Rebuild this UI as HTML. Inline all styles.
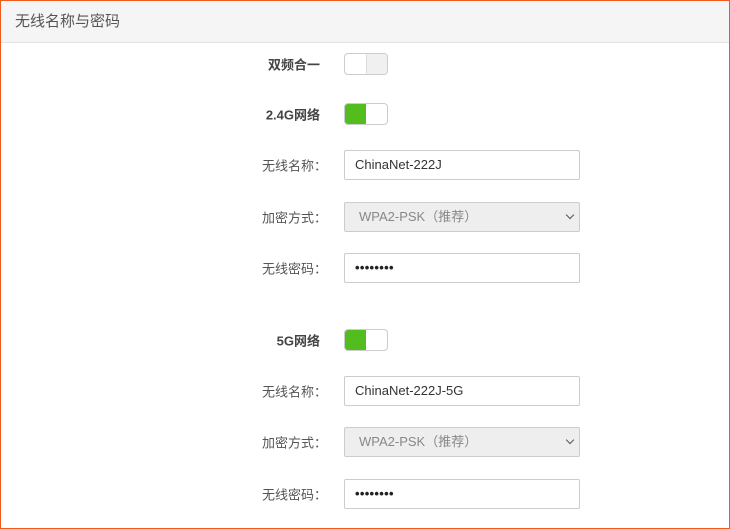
<!DOCTYPE html>
<html><head><meta charset="utf-8"><style>
body{margin:0;width:730px;height:529px;overflow:hidden;background:#fff;font-family:"Liberation Sans","Noto Sans CJK SC",sans-serif}
.frame{position:absolute;left:0;top:0;width:728px;height:527px;border:1px solid #f05a1a;}
.hd{position:absolute;left:0;top:0;width:728px;height:41px;background:#f5f5f5;border-bottom:1px solid #e3e3e3;}
.hd span{position:absolute;left:14px;top:9px;font-size:15px;color:#555}
.lab{position:absolute;left:262px;font-size:13px;color:#555;white-space:nowrap;transform:translateY(-50%)}
.b{font-weight:bold;color:#444;left:auto;right:410px}
.tg{position:absolute;left:344px;width:42px;height:20px;border:1px solid #ccc;border-radius:4px;background:#fff;transform:translateY(-50%);overflow:hidden}
.tg.off:after{content:"";position:absolute;left:21px;top:0;width:21px;height:20px;background:#f0f0f0;border-left:1px solid #ddd}
.tg.on:before{content:"";position:absolute;left:0;top:0;width:21px;height:20px;background:#52bd1c}
.in{position:absolute;left:344px;width:224px;height:28px;border:1px solid #ccc;border-radius:2px;background:#fff;transform:translateY(-50%);font-size:13px;color:#333;line-height:28px;padding-left:10px}
.sel{background:#eee;color:#888;padding-left:14px;width:220px}
.sel i{position:absolute;right:6px;top:9px;width:5px;height:5px;border-right:1.6px solid #555;border-bottom:1.6px solid #555;transform:rotate(45deg)}
.pw{font-size:13px;letter-spacing:0.3px;font-weight:bold;color:#222}
</style></head><body>
<div class="frame">
<div class="hd"><span>无线名称与密码</span></div>
</div>
<div class="lab b" style="top:64px">双频合一</div><div class="tg off" style="top:64px"></div>
<div class="lab b" style="top:114px">2.4G网络</div><div class="tg on" style="top:114px"></div>
<div class="lab" style="top:165px">无线名称：</div><div class="in" style="top:165px">ChinaNet-222J</div>
<div class="lab" style="top:217px">加密方式：</div><div class="in sel" style="top:217px">WPA2-PSK（推荐）<i></i></div>
<div class="lab" style="top:268px">无线密码：</div><div class="in pw" style="top:268px">••••••••</div>
<div class="lab b" style="top:340px">5G网络</div><div class="tg on" style="top:340px"></div>
<div class="lab" style="top:391px">无线名称：</div><div class="in" style="top:391px">ChinaNet-222J-5G</div>
<div class="lab" style="top:442px">加密方式：</div><div class="in sel" style="top:442px">WPA2-PSK（推荐）<i></i></div>
<div class="lab" style="top:494px">无线密码：</div><div class="in pw" style="top:494px">••••••••</div>
</body></html>
